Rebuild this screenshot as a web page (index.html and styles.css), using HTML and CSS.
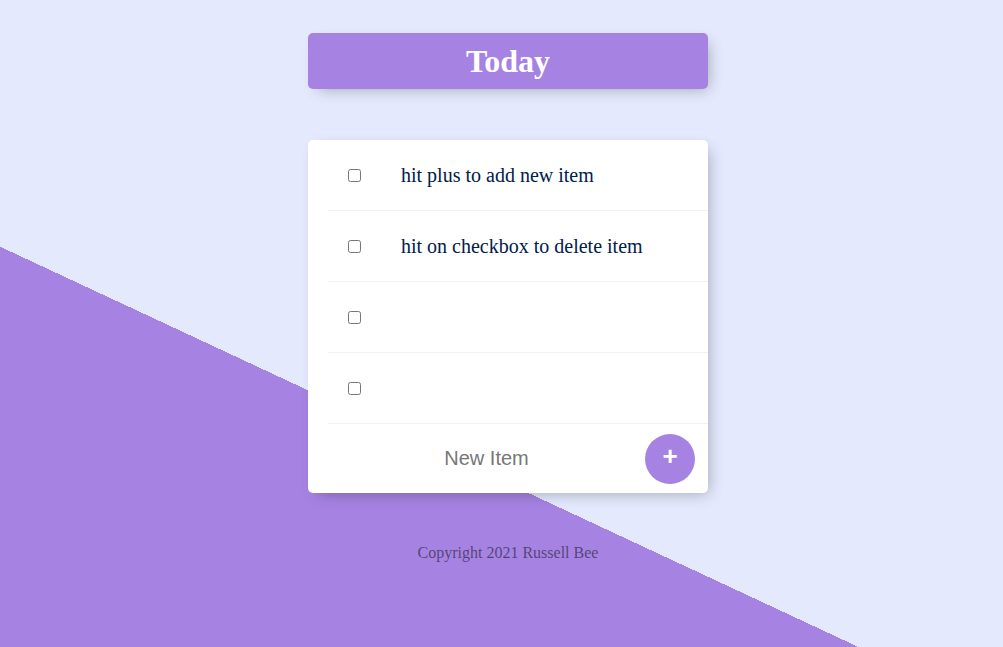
FILE: index.html
```html
<!DOCTYPE html>
<html lang="en">
<head>
<meta charset="utf-8">
<title>To Do List</title>
<link rel="stylesheet" href="styles.css">
</head>
<body>
  <div class="box heading">
    <h1>Today</h1>
  </div>
  <div class="box list">
    <div class="item">
      <input type="checkbox" class="check">
      <p class="text">hit plus to add new item</p>
    </div>
    <div class="item">
      <input type="checkbox" class="check">
      <p class="text">hit on checkbox to delete item</p>
    </div>
    <div class="item">
      <input type="checkbox" class="check">
      <p class="text"></p>
    </div>
    <div class="item">
      <input type="checkbox" class="check">
      <p class="text"></p>
    </div>
    <form class="item form-row" onsubmit="return false">
      <input type="text" class="new-item" placeholder="New Item" autocomplete="off">
      <button type="submit" class="add">+</button>
    </form>
  </div>
  <footer class="footer">Copyright 2021 Russell Bee</footer>
</body>
</html>
```

FILE: styles.css
```css
html {
  background-color: #E4E9FD;
  background-image: linear-gradient(25deg, #A683E3 50%, #E4E9FD 50%);
  background-repeat: no-repeat;
  background-size: 1003px 961px;
}

body {
  margin: 0;
  padding: 33px 0 0 13px;
  font-family: "Liberation Serif", "Times New Roman", serif;
}

.box {
  width: 400px;
  margin: 0 auto;
  background: #fff;
  border-radius: 5px;
  box-shadow: 5px 5px 15px -5px rgba(0, 0, 0, 0.3);
}

.heading {
  background-color: #A683E3;
  text-align: center;
}

.heading h1 {
  margin: 0;
  padding: 10px;
  color: #fff;
  font-size: 32px;
  line-height: 36px;
  font-weight: bold;
}

.list {
  margin-top: 51px;
  overflow: hidden;
}

.item {
  display: flex;
  align-items: center;
  min-height: 70px;
  margin-left: 20px;
  border-bottom: 1px solid #F1F1F1;
}

.check {
  width: 13px;
  height: 13px;
  margin: 0 20px;
  flex: none;
}

.text {
  margin: 0;
  padding: 20px;
  font-size: 20px;
  line-height: 23px;
  color: #00204a;
}

.form-row {
  min-height: 69px;
  border-bottom: none;
}

.new-item {
  width: 313px;
  height: 60px;
  padding: 0 2px;
  border: none;
  outline: none;
  text-align: center;
  font-family: "Liberation Sans", Arial, sans-serif;
  font-size: 20px;
  color: #333;
  background: transparent;
}

.new-item::placeholder {
  color: #777777;
}

.add {
  width: 50px;
  height: 50px;
  padding: 0 0 6px;
  border: none;
  border-radius: 50%;
  background-color: #A683E3;
  color: #fff;
  font-family: "Liberation Sans", Arial, sans-serif;
  font-size: 26px;
  font-weight: bold;
  line-height: 44px;
  text-align: center;
  cursor: pointer;
}

.footer {
  margin-top: 51px;
  text-align: center;
  font-size: 16px;
  line-height: 18px;
  color: rgba(0, 0, 0, 0.5);
}
```
